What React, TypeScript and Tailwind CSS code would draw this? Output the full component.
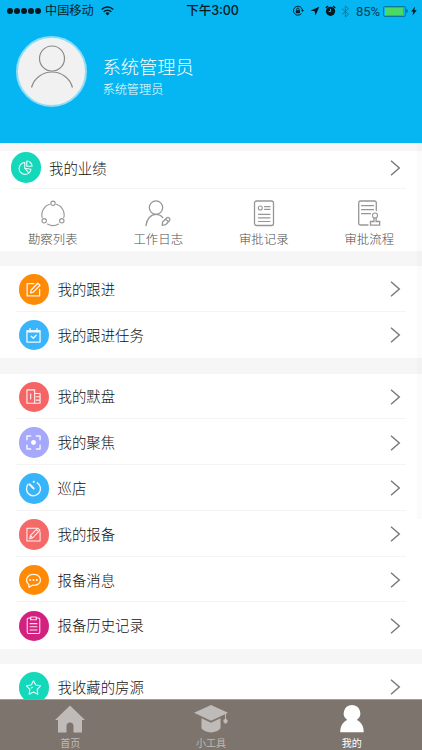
import type { ReactNode } from "react";

type Item = { label: string; color: string; icon: ReactNode };

const Glyph = ({ children }: { children: ReactNode }) => (
  <svg className="overflow-visible" width="15" height="15" viewBox="0 0 16 16" fill="none" stroke="#fff" strokeOpacity="0.9" strokeWidth="1.1" strokeLinecap="round" strokeLinejoin="round">
    {children}
  </svg>
);

const PieIcon = (
  <Glyph>
    <path d="M7.2 2.6A6.400 6.400 0 1 0 13.900 9.900L7.200 8.800Z M7.400 9l4 4.600" strokeWidth="1.200" />
    <path d="M9.300 1v5.700h5.700A5.700 5.700 0 0 0 9.300 1Z" strokeWidth="1.200" />
  </Glyph>
);
const EditIcon = (
  <Glyph>
    <path d="M8.500 1.700H1.200v13.100h13.300V8" strokeWidth="1.400" />
    <path d="M12.500 1.300l2.400 2.100-7.100 7.400-2.900.7.6-2.900Z" strokeWidth="1.400" />
  </Glyph>
);
const CalendarIcon = (
  <Glyph>
    <path d="M1 2.900h14v12.100H1Z M4.300.8v3.600 M11.700.8v3.600 M1 4h14" strokeWidth="1.400" />
    <path d="M5.500 8.800l2.300 2.200 3-3.200" strokeWidth="1.500" />
  </Glyph>
);
const BuildingIcon = (
  <Glyph>
    <path d="M1 .9h8.200v14.300H1Z M9.200 4.800H15v10.400H9.200 M5 5.200v5.300 M10.800 8.200h3.500 M10.800 11.800h3.500" strokeWidth="1.200" />
  </Glyph>
);
const FocusIcon = (
  <Glyph>
    <path d="M1 5V1H5 M11 1h4V5 M15 11v4H11 M5 15H1V11" strokeWidth="1.500" />
    <circle cx="8" cy="8" r="2.600" fill="#fff" stroke="none" />
  </Glyph>
);
const TimerIcon = (
  <Glyph>
    <path d="M2.200 3.500A7.500 7.500 0 1 0 12 1.900" strokeWidth="1.500" />
    <path d="M4 3.700l4.200 4.200" strokeWidth="2.200" />
    <circle cx="8.300" cy=".9" r="1.100" fill="#fff" stroke="none" />
  </Glyph>
);
const NoteIcon = (
  <Glyph>
    <path d="M11 1.300H1v13.700h14V5.400" />
    <path d="M12.500 1.200l2.400 2.100-7.800 8.200-3.200 1.100.8-3.300Z M11 2.900l2.400 2.100 M4.700 9.300l2.400 2.200" />
  </Glyph>
);
const ChatIcon = (
  <Glyph>
    <path d="M3 12.300C-1.500 8.600.900 1.400 8 1.400s9.700 7 4.900 10.500C10.700 13.300 8 13.200 6.600 13L3.200 15.200Z" strokeWidth="1.400" />
    <g fill="#fff" stroke="none">
      <circle cx="4.400" cy="7.500" r="1.100" />
      <circle cx="8" cy="7.500" r="1.100" />
      <circle cx="11.600" cy="7.500" r="1.100" />
    </g>
  </Glyph>
);
const ClipboardIcon = (
  <Glyph>
    <path d="M5 0H2.800A1.500 1.500 0 0 0 1.300 1.500V15A1.500 1.500 0 0 0 2.800 16.500H13.200A1.500 1.500 0 0 0 14.700 15V1.500A1.500 1.500 0 0 0 13.200 0H11" />
    <path d="M5-1h6v2.800H5Z M4.300 6h7.400 M4.300 9.400h7.400 M4.300 12.800h7.400" />
  </Glyph>
);
const StarIcon = (
  <Glyph>
    <path d="M8 .9l2.400 4.500 5.100.8-3.600 3.800.7 5.200L8 12.900l-4.600 2.300.7-5.200L.5 6.200l5.100-.8Z M5.500 8.500l1.500-.8" strokeWidth="1.200" />
  </Glyph>
);

const followItems: Item[] = [
  { label: "我的跟进", color: "bg-[#ff8a05]", icon: EditIcon },
  { label: "我的跟进任务", color: "bg-[#3ab5fb]", icon: CalendarIcon },
];
const reportItems: Item[] = [
  { label: "我的默盘", color: "bg-[#f56565]", icon: BuildingIcon },
  { label: "我的聚焦", color: "bg-[#a5a8fb]", icon: FocusIcon },
  { label: "巡店", color: "bg-[#38b5fa]", icon: TimerIcon },
  { label: "我的报备", color: "bg-[#f56a69]", icon: NoteIcon },
  { label: "报备消息", color: "bg-[#ff8a05]", icon: ChatIcon },
  { label: "报备历史记录", color: "bg-[#d3217f]", icon: ClipboardIcon },
];

const Chevron = () => (
  <svg className="shrink-0" width="12" height="18" viewBox="0 0 12 18" fill="none" stroke="#777" strokeWidth="1.400">
    <path d="M1 1.800L9.300 9l-8.300 7.200" />
  </svg>
);

const Badge = ({ item }: { item: Item }) => (
  <span className={`flex size-[30.500px] shrink-0 items-center justify-center rounded-full ${item.color}`}>{item.icon}</span>
);

function Row({ item, last = false }: { item: Item; last?: boolean }) {
  return (
    <div className={`ml-4 mr-[16px] flex h-[45.800px] items-center border-b pl-[2.500px] pr-[4px] pt-[2px] ${last ? "border-transparent" : "border-[#f4f4f4]"}`}>
      <Badge item={item} />
      <span className="ml-[8.500px] flex-1 pt-px text-[14.400px] leading-5 text-[#111]">{item.label}</span>
      <Chevron />
    </div>
  );
}

const Shortcut = ({ label, children }: { label: string; children: ReactNode }) => (
  <div className="flex flex-1 flex-col items-center">
    <svg width="28" height="28" viewBox="0 0 28 28" fill="none" stroke="#969696" strokeWidth="1.100" strokeLinecap="round">
      {children}
    </svg>
    <span className="mt-[4px] text-[12.400px] leading-[18px] text-[#4c4c4c]">{label}</span>
  </div>
);

function StatusBar() {
  return (
    <div className="flex h-[22px] items-center pl-[7px] pr-[5px] text-[12px] font-normal leading-none text-[#06222e]">
      <div className="flex flex-1 items-center">
        <div className="flex gap-[1px]">
          {[0, 1, 2, 3, 4].map((n) => (
            <span key={n} className="size-[6px] rounded-full bg-[#06171f]" />
          ))}
        </div>
        <span className="ml-[4px] pt-px text-[12.200px]">中国移动</span>
        <svg className="ml-[7px]" width="13" height="10" viewBox="0 0 13 10" fill="none" stroke="#06171f" strokeWidth="1.500">
          <path d="M.7 3.500a8.200 8.200 0 0 1 11.600 0M2.700 5.700a5.400 5.400 0 0 1 7.600 0" />
          <path d="M4.400 7.300L6.500 9.500l2.100-2.200a3 3 0 0 0-4.200 0Z" fill="#06171f" stroke="none" />
        </svg>
      </div>
      <span className="ml-px pt-px text-[12.500px] font-medium text-[#06171f]">下午3:00</span>
      <div className="flex flex-1 items-center justify-end">
        <svg width="12" height="12" viewBox="0 0 12 12" fill="none" stroke="#06222e" strokeWidth="1">
          <path d="M9.500 8.500A4.500 4.500 0 1 1 10.400 5M4.700 5.500V4.200a1.200 1.200 0 0 1 2.400 0v1.300" />
          <path d="M3.800 5.300h4.200v3H3.800ZM9 5h3l-1.500 2Z" fill="#06222e" stroke="none" />
        </svg>
        <svg className="ml-[6px]" width="10" height="10" viewBox="0 0 10 10">
          <path d="M9.300.7L.5 4.600l4.200.7.8 4.100Z" fill="#06171f" />
        </svg>
        <svg className="ml-[5px]" width="11" height="12" viewBox="0 0 11 12">
          <circle cx="5.500" cy="6.300" r="4.600" fill="#06171f" />
          <path d="M.8 3L3 1M10.200 3L8 1" stroke="#06171f" strokeWidth="1.400" />
          <path d="M5.500 3.800v2.700H3.700" stroke="#05b6f2" strokeWidth="1" fill="none" />
        </svg>
        <svg className="ml-[5px]" width="9" height="13" viewBox="0 0 9 13" fill="none" stroke="#067fa9" strokeWidth="1">
          <path d="M1 3.600l6.600 5.600L4.400 12V1l3.200 2.800L1 9.400" />
        </svg>
        <span className="ml-[6px] font-['Roboto',sans-serif] text-[13px] text-[#064055]">85%</span>
        <div className="ml-[3px] h-[11px] w-[23px] rounded-[2px] border border-[#087aa1] p-px">
          <div className="h-full w-[18px] bg-[#4bd964]" />
        </div>
        <span className="h-[4px] w-[2px] rounded-r bg-[#087aa1]" />
        <svg className="ml-[3px]" width="6" height="10" viewBox="0 0 6 10">
          <path d="M4 .5L.3 5.500h2L1.500 9.500l4.200-5.200H3.400Z" fill="#06171f" />
        </svg>
      </div>
    </div>
  );
}

const Tab = ({ label, active = false, children }: { label: string; active?: boolean; children: ReactNode }) => (
  <div className={`flex flex-1 flex-col items-center pt-[5px] ${active ? "text-white" : "text-[#bfbbb8]"}`}>
    <svg width="34" height="29" viewBox="0 0 34 29" fill="currentColor">
      {children}
    </svg>
    <span className="mt-[2px] text-[10px] font-normal leading-[14px]">{label}</span>
  </div>
);

export default function App() {
  return (
    <div className="flex h-[750px] w-[422px] flex-col overflow-hidden bg-white font-['Inter','Noto_Sans_CJK_SC',sans-serif] font-light">
      <header className="h-[143px] shrink-0 bg-[#05b6f2]">
        <StatusBar />
        <div className="flex items-center pl-[15.500px] pt-[14px]">
          <div className="flex size-[71px] items-center justify-center rounded-full border-2 border-[#8edcf7] bg-[#f1f1f2]">
            <svg width="67" height="67" viewBox="0 0 67 67" fill="none" stroke="#8a8a8a" strokeWidth="1.200">
              <circle cx="34" cy="20.500" r="12.500" />
              <path d="M13.500 49.500a21.300 21.300 0 0 1 41 0" />
            </svg>
          </div>
          <div className="ml-[16px] flex flex-col pt-[11px] text-white">
            <span className="text-[18.300px] leading-6">系统管理员</span>
            <span className="mt-[2px] text-[12.200px] leading-[18px]">系统管理员</span>
          </div>
        </div>
      </header>

      <main className="relative min-h-0 flex-1 overflow-hidden">
        <div className="absolute right-0 top-0 h-[376px] w-[5px] bg-black/[0.015]" />
        <div className="h-[7.500px] bg-[#f7f5f6]" />
        <section className="h-[100.500px]">
          <div className="ml-[10.500px] mr-[16px] flex h-[38px] items-center border-b border-[#f4f4f4] pb-[3px] pr-[4px]">
            <Badge item={{ label: "我的业绩", color: "bg-[#13d8ba]", icon: PieIcon }} />
            <span className="ml-[8px] flex-1 pt-[2px] text-[14.400px] leading-5 text-[#111]">我的业绩</span>
            <Chevron />
          </div>
          <div className="flex pt-[10px]">
            <Shortcut label="勘察列表">
              <path d="M10.500 5.300A11 11 0 0 0 3.200 18.500M17.500 5.300A11 11 0 0 1 24.800 18.500M8.500 25a11 11 0 0 0 11 0" />
              <circle cx="14" cy="4.300" r="2.200" />
              <circle cx="5.200" cy="21.800" r="2.200" />
              <circle cx="22.800" cy="21.800" r="2.200" />
            </Shortcut>
            <Shortcut label="工作日志">
              <circle cx="12" cy="8.600" r="6.700" strokeWidth="1.300" />
              <path d="M2 26.500c.7-6.500 4.700-11.200 10-11.200 3 0 5.300 1.300 6.700 3.300" strokeWidth="1.300" />
              <path d="M18.300 26.300l.3-3.200 3.900-4.100c1.900-1.400 4.200.5 3.100 2.500l-3.900 4.200Z M21.500 20.200l2.900 2.300" strokeWidth="1.300" />
            </Shortcut>
            <Shortcut label="审批记录">
              <rect x="4.500" y="2" width="19" height="24.500" rx="2" strokeWidth="1.300" />
              <circle cx="10.300" cy="9" r="2" />
              <path d="M14.500 7.700h5.500M14.500 10.300h5.500M8.500 15.300h11.500M8.500 18.800h11.500M8.500 22.500h11.500" strokeWidth="1.200" />
            </Shortcut>
            <Shortcut label="审批流程">
              <path d="M13 26H5.500A1.800 1.800 0 0 1 3.700 24.200V3.800A1.800 1.800 0 0 1 5.500 2h14A1.800 1.800 0 0 1 21.300 3.800V11.500" strokeWidth="1.300" />
              <path d="M6.500 6.700h12M6.500 10.700h12M6.500 14.700h9" strokeWidth="1.200" />
              <circle cx="20" cy="16.500" r="2.500" />
              <path d="M19 19v3.500h-3.500v3.700h9.200v-3.700h-3.600V19" strokeWidth="1.300" />
            </Shortcut>
          </div>
        </section>
        <div className="h-[15px] bg-[#f6f6f6]" />
        <section className="h-[92px]">
          {followItems.map((item, i) => (
            <Row key={item.label} item={item} last={i === followItems.length - 1} />
          ))}
        </section>
        <div className="h-[15.500px] bg-[#f6f6f6]" />
        <section className="h-[275.500px]">
          {reportItems.map((item, i) => (
            <Row key={item.label} item={item} last={i === reportItems.length - 1} />
          ))}
        </section>
        <div className="h-[15px] bg-[#f6f6f6]" />
        <Row item={{ label: "我收藏的房源", color: "bg-[#13d8ba]", icon: StarIcon }} last />
      </main>

      <nav className="flex h-[51px] shrink-0 border-t border-[#a39d99] bg-[#7e746e]">
        <Tab label="首页">
          <path d="M17 .5L2 15h3v12.500h8.500V21a3.500 3.500 0 0 1 7 0v6.500H29V15h3Z" />
        </Tab>
        <Tab label="小工具">
          <path d="M17 0L0 7.700l17 8 14-6.500V14a2 2 0 0 0-1 3.500l1.500 1.500 1.500-1.500a2 2 0 0 0-1-3.500V8.700l2-1Z" />
          <path d="M7.500 13.300l9.500 4.500 9.500-4.500v10c-3.500 5.500-15.500 5.500-19 0Z" />
        </Tab>
        <Tab label="我的" active>
          <path d="M17 0a8.300 8.300 0 0 0-4.700 15.100C7.500 17 5.300 21.500 5.300 27.300h23.400c0-5.800-2.200-10.300-7-12.200A8.300 8.300 0 0 0 17 0Z" />
        </Tab>
      </nav>
    </div>
  );
}
